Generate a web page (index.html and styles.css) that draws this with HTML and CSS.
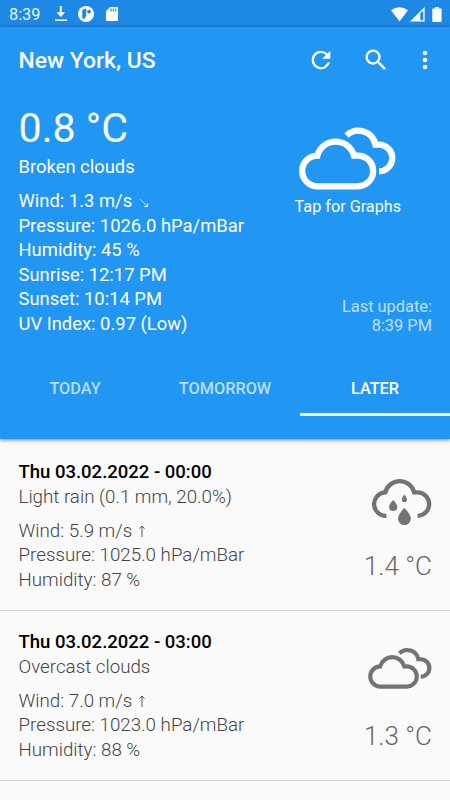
FILE: index.html
```
<!DOCTYPE html>
<html lang="en">
<head>
    <meta charset="UTF-8">
    <meta name="viewport" content="width=device-width, initial-scale=1.0">
    <title>Weather</title>
    <link rel="stylesheet" href="styles.css">
</head>
<body>
    <!-- Shared icon shapes -->
    <svg class="defs" width="0" height="0">
        <symbol id="clouds" viewBox="0 0 97 64">
            <path fill="none" stroke="currentColor" stroke-width="6.3" d="M18.8 60.3A15.35 15.35 0 0 1 18.3 29.6A19 19 0 0 1 55 29.6H58.8A15.35 15.35 0 0 1 58.8 60.3Z M47.5 9.6A17.2 17.2 0 0 1 76.4 18.6H79.9A13.35 13.35 0 0 1 80 45.3"/>
        </symbol>
        <symbol id="rain" viewBox="0 0 60 49">
            <path fill="none" stroke="currentColor" stroke-width="4.3" d="M14.3 38.8A11.7 11.7 0 0 1 13.3 15.4A14.9 14.9 0 0 1 42.2 15.4H45.4A11.7 11.7 0 0 1 45.6 38.8"/>
            <path fill="currentColor" d="M32.4 30.7Q38.8 37.6 38.8 41.7A6.4 6.4 0 0 1 26 41.7Q26 37.6 32.4 30.7ZM21.2 23Q25.3 27.2 25.3 29.8A4.1 4.1 0 0 1 17.1 29.8Q17.1 27.2 21.2 23ZM32.4 17.6Q35 20.6 35 22.4A2.6 2.6 0 0 1 29.8 22.4Q29.8 20.6 32.4 17.6Z"/>
        </symbol>
    </svg>

    <div class="status-bar">
        <span class="clock">8:39</span>
        <svg class="download" width="14" height="16" viewBox="0 0 14 16"><path fill="#fff" d="M5.8 0h2v6.2h3.3L6.8 11 2.5 6.2h3.3zM1 13.4h12V15H1z"/></svg>
        <svg class="app" width="16" height="16" viewBox="0 0 16 16"><circle cx="8" cy="8" r="8" fill="#fff"/><path fill="#1e88e5" d="M4.2 4.2Q5.5 2.7 8.2 2.8V9.5Q8.2 11 6.8 11.4V13.2Q5.2 13 4.2 12z"/><circle cx="11" cy="5.6" r="1.9" fill="#1e88e5"/></svg>
        <svg class="sd" width="12" height="14" viewBox="0 0 12 14"><path fill="#fff" d="M4.2 0H11a1 1 0 0 1 1 1v12a1 1 0 0 1-1 1H1a1 1 0 0 1-1-1V4.2z"/><path stroke="#1e88e5" stroke-width="1.2" d="M5 1.5v3M7.4 1.5v3M9.7 1.5v3"/></svg>
        <div class="system">
            <svg width="17" height="15" viewBox="0 0 17 15"><path fill="#fff" d="M0 3.2Q8.5-2.8 17 3.2L8.5 14.5z"/></svg>
            <svg class="signal" width="15" height="15" viewBox="0 0 15 15"><path fill="#fff" d="M14.6 0v14.6H0zM13.3 4L10.3 6V13.2h3z" fill-rule="evenodd"/></svg>
            <svg class="battery" width="10" height="15" viewBox="0 0 10 15"><path fill="#fff" d="M3 0h4v1.5h2q.6 0 .6.7v12q0 .8-.8.8H1.1q-.8 0-.8-.8v-12q0-.7.8-.7H3z"/></svg>
        </div>
    </div>

    <header>
        <div class="toolbar">
            <h1>New York, US</h1>
            <svg class="refresh" width="28" height="28" viewBox="0 0 24 24"><path fill="#fff" d="M17.65 6.35A7.96 7.96 0 0 0 12 4a8 8 0 1 0 7.73 10h-2.08A6 6 0 1 1 12 6c1.66 0 3.14.69 4.22 1.78L13 11h7V4z"/></svg>
            <svg class="search" width="28" height="28" viewBox="0 0 24 24"><path fill="#fff" d="M15.5 14h-.79l-.28-.27A6.5 6.5 0 1 0 13.73 14.43l.27.28v.79l5 4.99L20.49 19zm-6 0a4.5 4.5 0 1 1 0-9 4.5 4.5 0 0 1 0 9z"/></svg>
            <svg class="more" width="28" height="28" viewBox="0 0 24 24"><path fill="#fff" d="M12 8a2 2 0 1 0 0-4 2 2 0 0 0 0 4zm0 2a2 2 0 1 0 0 4 2 2 0 0 0 0-4zm0 6a2 2 0 1 0 0 4 2 2 0 0 0 0-4z"/></svg>
        </div>
        <div class="current">
            <div class="info">
                <div class="temperature">0.8 °C</div>
                <div class="description">Broken clouds</div>
                <div class="details">
                    <p>Wind: 1.3 m/s <svg class="arrow" width="10" height="10" viewBox="0 0 10 10"><path fill="none" stroke="currentColor" stroke-width="0.9" d="M1 1l7.4 7.4M8.6 5.2v3.4h-3.4"/></svg></p>
                    <p>Pressure: 1026.0 hPa/mBar</p>
                    <p>Humidity: 45 %</p>
                    <p>Sunrise: 12:17 PM</p>
                    <p>Sunset: 10:14 PM</p>
                    <p>UV Index: 0.97 (Low)</p>
                </div>
            </div>
            <div class="side">
                <div class="graphs">
                    <svg width="97" height="64"><use href="#clouds"/></svg>
                    <div>Tap for Graphs</div>
                </div>
                <div class="last-update">Last update:<br>8:39 PM</div>
            </div>
        </div>
        <nav>
            <a href="#">TODAY</a>
            <a href="#">TOMORROW</a>
            <a href="#" class="active">LATER</a>
        </nav>
    </header>

    <main>
        <div class="item">
            <div class="info">
                <h2>Thu 03.02.2022 - 00:00</h2>
                <div class="description">Light rain (0.1 mm, 20.0%)</div>
                <div class="details">
                    <p>Wind: 5.9 m/s <svg class="arrow up" width="8" height="12" viewBox="0 0 8 12"><path fill="none" stroke="currentColor" stroke-width="0.9" d="M4 12V1M1.5 3.7L4 1l2.5 2.7"/></svg></p>
                    <p>Pressure: 1025.0 hPa/mBar</p>
                    <p>Humidity: 87 %</p>
                </div>
            </div>
            <div class="forecast">
                <svg width="60" height="49"><use href="#rain"/></svg>
                <div>1.4 °C</div>
            </div>
        </div>
        <div class="item">
            <div class="info">
                <h2>Thu 03.02.2022 - 03:00</h2>
                <div class="description">Overcast clouds</div>
                <div class="details">
                    <p>Wind: 7.0 m/s <svg class="arrow up" width="8" height="12" viewBox="0 0 8 12"><path fill="none" stroke="currentColor" stroke-width="0.9" d="M4 12V1M1.5 3.7L4 1l2.5 2.7"/></svg></p>
                    <p>Pressure: 1023.0 hPa/mBar</p>
                    <p>Humidity: 88 %</p>
                </div>
            </div>
            <div class="forecast cloudy">
                <svg width="64" height="42"><use href="#clouds"/></svg>
                <div>1.3 °C</div>
            </div>
        </div>
    </main>
</body>
</html>
```

FILE: styles.css
```
* {
    box-sizing: border-box;
}
body {
    margin: 0;
    height: 800px;
    overflow: hidden;
    font-family: Roboto, sans-serif;
    font-size: 18.4px;
    line-height: 24.5px;
    background-color: #fafafa;
    color: #666;
}
h1, h2, p {
    margin: 0;
}
svg {
    display: block;
    flex-shrink: 0;
}
.defs {
    position: absolute;
}

/* Status bar */
.status-bar {
    display: flex;
    align-items: center;
    height: 27px;
    padding: 1px 8px 0 9px;
    background-color: #1e88e5;
    color: #fff;
}
.clock {
    width: 45px;
    padding-top: 2px;
    font-size: 16.3px;
    opacity: 0.9;
}
.app {
    margin-left: 10px;
}
.sd {
    margin-left: 12px;
}
.system {
    display: flex;
    margin-left: auto;
}
.signal {
    margin-left: 2px;
}
.battery {
    margin-left: 7px;
}

/* Blue header */
header {
    height: 412px;
    background-color: #2196f3;
    color: #fff;
    box-shadow: 0 1px 4px rgba(0, 0, 0, 0.5);
}
.toolbar {
    display: flex;
    align-items: center;
    height: 66px;
    padding: 0 11px 0 18.5px;
}
h1 {
    margin-right: auto;
    padding-top: 3px;
    font-size: 22.9px;
    font-weight: 500;
}
.search {
    margin-left: 27px;
}
.more {
    margin-left: 21px;
}
.current {
    display: flex;
    justify-content: space-between;
    height: 254px;
    padding: 11px 18px 0 18.5px;
}
.temperature {
    font-size: 41.2px;
    line-height: 49px;
}
.current .description {
    margin-top: 2px;
}
.details {
    margin-top: 9.5px;
}
.arrow {
    display: inline-block;
    margin-left: 2px;
    vertical-align: -1px;
}
.arrow.up {
    margin-left: 1px;
    vertical-align: 0;
}
.side {
    display: flex;
    flex-direction: column;
    align-items: flex-end;
    padding-top: 22px;
}
.graphs {
    display: flex;
    flex-direction: column;
    align-items: center;
    margin-right: 31px;
    font-size: 16.2px;
}
.graphs div {
    margin-top: 4.5px;
}
.last-update {
    margin-top: 78px;
    font-size: 16.4px;
    line-height: 19px;
    text-align: right;
    opacity: 0.7;
}
nav {
    display: flex;
    height: 69px;
}
nav a {
    flex: 1;
    height: 69px;
    padding-top: 30px;
    font-size: 16.3px;
    font-weight: 500;
    text-align: center;
    text-decoration: none;
    color: rgba(255, 255, 255, 0.7);
}
nav a.active {
    color: #fff;
    border-bottom: 3px solid #fff;
}

/* The active underline sits above the bottom edge of the header */
nav a {
    height: 69px;
}

/* Forecast list */
.item {
    display: flex;
    justify-content: space-between;
    height: 170px;
    padding: 19.4px 18px 0 18.5px;
    border-bottom: 1px solid #d8d8d8;
}
.item:first-child {
    height: 172px;
    padding-top: 21.4px;
}
h2 {
    font-size: 18.5px;
    font-weight: 500;
    color: #000;
}
.item .info {
    font-size: 18.75px;
    font-weight: 300;
    color: #444;
}
.forecast {
    display: flex;
    flex-direction: column;
    align-items: flex-end;
    padding-top: 17px;
    font-size: 26px;
    font-weight: 300;
}
.forecast div {
    margin-top: 27.5px;
}
.forecast svg {
    color: #737373;
}
.forecast.cloudy div {
    margin-top: 34.5px;
}
```
